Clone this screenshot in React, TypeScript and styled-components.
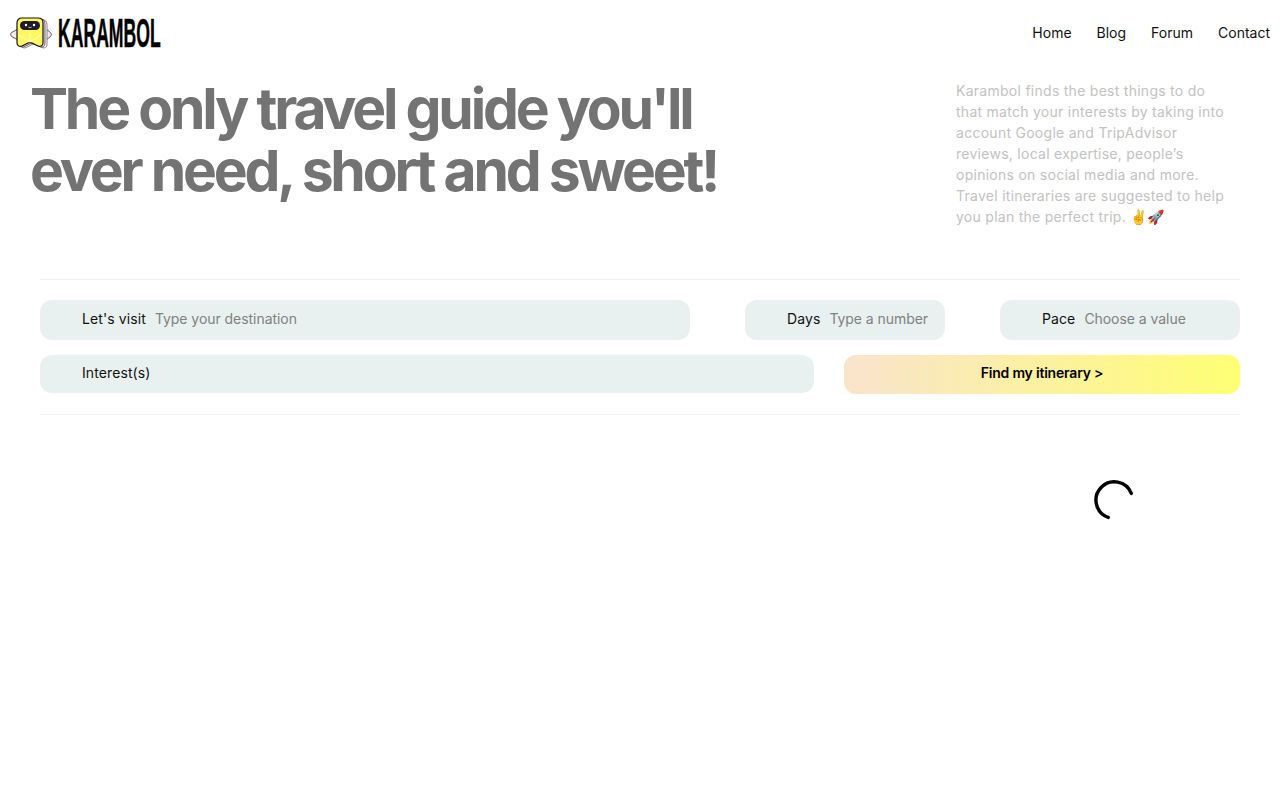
import React from "react";
import styled, { createGlobalStyle } from "styled-components";

const Global = createGlobalStyle`
  html, body { margin: 0; padding: 0; background: #fff; }
  body { font-family: "Inter", "Liberation Sans", sans-serif; color: #000; }
  * { box-sizing: border-box; }
`;
const Page = styled.div`width: 1280px; height: 800px; overflow: hidden; display: flex; flex-direction: column;`;
const Header = styled.header`height: 66px; display: flex; align-items: center; justify-content: space-between; padding: 0 10px;`;
const Brand = styled.div`display: flex; align-items: center; gap: 6px;`;
const Wordmark = styled.span`
  display: inline-block; width: 102px; font: 700 40px/34px "Liberation Sans", sans-serif; text-transform: uppercase;
  -webkit-text-stroke: .5px #000; transform: scaleX(.44); transform-origin: left center; white-space: nowrap;
`;
const Nav = styled.nav`display: flex; gap: 25px;`;
const NavLink = styled.a`font-size: 14px; line-height: 20px; color: #111;`;
const Hero = styled.section`height: 213px; padding: 12px 52px 0 30px; display: flex; justify-content: space-between;`;
const Title = styled.h1`
  margin: 0; width: 740px; font: 700 57px/62px "Inter", sans-serif; letter-spacing: -3.2px; color: #737373;
`;
const Intro = styled.p`
  margin: 2px 0 0; width: 272px; font-size: 14px; line-height: 21px; letter-spacing: .27px; color: #c2c2c2;
`;
const Search = styled.section`
  margin: 0 40px; height: 136px; border-top: 1px solid #e9f0ef; border-bottom: 1px solid #e9f0ef;
  padding-top: 20px; display: flex; flex-direction: column; gap: 15px;
`;
const Row = styled.div`display: flex; justify-content: space-between;`;
const Field = styled.div<{ $w: number; $h?: number; $gap?: number }>`
  width: ${p => p.$w}px; height: ${p => p.$h ?? 40}px; margin-left: ${p => p.$gap ?? 0}px; border-radius: 12px; background: #e9f1f0;
  display: flex; align-items: center; gap: 9px; padding: 0 0 3px 42px; font-size: 14px; white-space: nowrap;
`;
const Label = styled.span`color: #111; letter-spacing: .1px;`;
const Hint = styled.span`color: #808080; letter-spacing: -.05px;`;
const Find = styled.button`
  width: 396px; height: 39px; border: 0; border-radius: 12px; padding: 0 0 5px; font: 600 14px "Inter", sans-serif; letter-spacing: -.2px; color: #000;
  background: linear-gradient(90deg, #f9e3cc, #ffff73);
`;
const Loader = styled.div`flex: 1; position: relative;`;
const Spinner = styled.svg`position: absolute; left: 1094px; top: 65px;`;
const BODY = "M7 6c0-3 2-5 5-5h16c3 0 5 2 5 5v20c0 3-3 4-5 3l-6-3c-1-.5-3-.5-4 0l-6 3c-2 1-5 0-5-3Z";

export default function App() {
  return (
    <Page>
      <Global />
      <Header>
        <Brand>
          <svg width="42" height="32" viewBox="0 0 42 32" aria-hidden="true">
            <path d="M8 12 1.500 15.500c-1 1-1 3 0 4L8 23ZM36 12l4.500 3.500c1 1 1 3 0 4L36 23Z" fill="#f2eaee" stroke="#3a2d3a" strokeWidth=".8" />
            <path d={BODY} transform="translate(4 1.500)" fill="#fff" stroke="#6a5f6a" strokeWidth=".8" />
            <path d={BODY} transform="translate(2 .8)" fill="#e6dde2" stroke="#4a3f4a" strokeWidth=".8" />
            <path d={BODY} fill="#fff75e" stroke="#17131a" strokeWidth="1.2" />
            <rect x="10" y="4" width="20" height="9" rx="4.500" fill="#211a28" />
            <circle cx="16" cy="8" r="1.200" fill="#fff" /><circle cx="24" cy="8" r="1.200" fill="#fff" />
            <path d="M18.500 10c1 .8 2 .8 3 0" fill="none" stroke="#fff" strokeWidth=".8" />
            <path d="m9 18 11 7 11-7M20 16v9" fill="none" stroke="#fffbd0" strokeWidth=".9" />
          </svg>
          <Wordmark>Karambol</Wordmark>
        </Brand>
        <Nav>
          <NavLink>Home</NavLink><NavLink>Blog</NavLink><NavLink>Forum</NavLink><NavLink>Contact</NavLink>
        </Nav>
      </Header>
      <Hero>
        <Title>The only travel guide you'll ever need, short and sweet!</Title>
        <Intro>Karambol finds the best things to do that match your interests by taking into account Google and TripAdvisor reviews, local expertise, people’s opinions on social media and more. Travel itineraries are suggested to help you plan the perfect trip. ✌️🚀</Intro>
      </Hero>
      <Search>
        <Row>
          <Field $w={650}><Label>Let's visit</Label><Hint>Type your destination</Hint></Field>
          <Field $w={200} $gap={55}><Label>Days</Label><Hint>Type a number</Hint></Field>
          <Field $w={240} $gap={55}><Label>Pace</Label><Hint>Choose a value</Hint></Field>
        </Row>
        <Row>
          <Field $w={774} $h={38}><Label>Interest(s)</Label></Field>
          <Find>Find my itinerary &gt;</Find>
        </Row>
      </Search>
      <Loader>
        <Spinner width="40" height="40" viewBox="0 0 40 40" fill="none" aria-hidden="true">
          <path d="M37.300 13.400A18.300 18.300 0 1 0 14.200 37.400" stroke="#000" strokeWidth="3.400" strokeLinecap="round" />
        </Spinner>
      </Loader>
    </Page>
  );
}
